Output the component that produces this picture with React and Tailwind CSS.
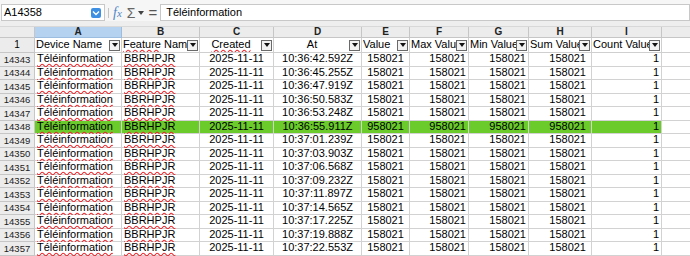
import React from "react";

const FONT = { fontFamily: '"Liberation Sans", Arial, sans-serif' };

const rows = [
  ["14343", "10:36:42.592Z", false],
  ["14344", "10:36:45.255Z", false],
  ["14345", "10:36:47.919Z", false],
  ["14346", "10:36:50.583Z", false],
  ["14347", "10:36:53.248Z", false],
  ["14348", "10:36:55.911Z", true],
  ["14349", "10:37:01.239Z", false],
  ["14350", "10:37:03.903Z", false],
  ["14351", "10:37:06.568Z", false],
  ["14352", "10:37:09.232Z", false],
  ["14353", "10:37:11.897Z", false],
  ["14354", "10:37:14.565Z", false],
  ["14355", "10:37:17.225Z", false],
  ["14356", "10:37:19.888Z", false],
  ["14357", "10:37:22.553Z", false],
];

const FilterBtn = () => (
  <span className="shrink-0 w-[11px] h-[11px] border border-[#6a6a6a] bg-[#f2f2f2] flex items-center justify-center mr-[1px]">
    <span className="w-0 h-0 border-l-[3px] border-r-[3px] border-t-[4px] border-l-transparent border-r-transparent border-t-[#111]" />
  </span>
);

const wavy = "underline decoration-wavy decoration-[#e8242a] underline-offset-[1px]";

function HeadCell({ w, children, center }) {
  return (
    <div className={`${w} h-full shrink-0 border-r border-b border-[#cfcfcf] flex items-center pl-[1px] overflow-hidden`}>
      <span className={`flex-1 min-w-0 overflow-hidden whitespace-nowrap pb-[2px] ${center ? "text-center" : "text-left"}`}>{children}</span>
      <FilterBtn />
    </div>
  );
}

export default function App() {
  const letters = [
    ["A", "w-[87px]"],
    ["B", "w-[78px]"],
    ["C", "w-[74px]"],
    ["D", "w-[88px]"],
    ["E", "w-[48px]"],
    ["F", "w-[59px]"],
    ["G", "w-[60px]"],
    ["H", "w-[63px]"],
    ["I", "w-[70px]"],
  ];
  return (
    <div className="w-[690px] h-[256px] overflow-hidden bg-[#f4f4f4] text-black" style={FONT}>
      {/* Formula bar */}
      <div className="h-[21px] flex items-end bg-[#f6f6f6]">
        <div className="ml-[1px] w-[104px] h-[17px] bg-white border border-[#c8c8c8] flex items-center pl-[2px] pr-[3px]">
          <span className="flex-1 text-[11px] leading-none">A14358</span>
          <span className="w-[10px] h-[10px] rounded-[2px] bg-[#3d8fe3] flex items-center justify-center">
            <svg width="8" height="6" viewBox="0 0 8 6"><path d="M1 1.5 L4 4.5 L7 1.5" stroke="white" strokeWidth="1.4" fill="none" /></svg>
          </span>
        </div>
        <div className="ml-[3px] mb-[3px] w-[1px] h-[10px] bg-[#c4c4c4]" />
        <div className="h-[17px] flex items-center">
          <span className="ml-[4px] text-[14px] leading-none italic text-[#4f86c6]" style={{ fontFamily: '"Liberation Serif", serif' }}>
            f<span className="text-[11px]">x</span>
          </span>
          <span className="ml-[5px] text-[14px] leading-none text-[#666]">Σ</span>
          <span className="ml-[3px] w-0 h-0 border-l-[3px] border-r-[3px] border-t-[4px] border-l-transparent border-r-transparent border-t-[#444]" />
          <span className="ml-[4px] text-[15px] leading-none text-[#555]">=</span>
        </div>
        <div className="ml-[3px] flex-1 h-[17px] bg-white border border-[#c8c8c8] flex items-center pl-[5px] text-[11px]">
          Téléinformation
        </div>
      </div>
      <div className="h-[6px] bg-[#eeeeee] border-b border-[#d8d8d8]" />

      {/* Column letters */}
      <div className="h-[11px] flex text-[10px] font-bold leading-none text-[#222]">
        <div className="w-[35px] shrink-0 bg-[#ececec] border-r border-b border-[#c6c6c6]" />
        {letters.map(([l, w], i) => (
          <div
            key={l}
            className={`${w} shrink-0 flex items-center justify-center border-r border-b ${i === 0 ? "bg-[#b5d3f1] border-[#9dbde0]" : "bg-[#ececec] border-[#c6c6c6]"}`}
          >
            {l}
          </div>
        ))}
        <div className="flex-1 bg-[#ececec] border-b border-[#c6c6c6]" />
      </div>

      {/* Header row 1 */}
      <div className="h-[15px] flex text-[11px] leading-none bg-white">
        <div className="w-[35px] shrink-0 bg-[#ececec] border-r border-b border-[#c6c6c6] flex items-center justify-center text-[10px]">1</div>
        <HeadCell w="w-[87px]">Device Name</HeadCell>
        <HeadCell w="w-[78px]"><span className={wavy}>Feature</span> Name</HeadCell>
        <HeadCell w="w-[74px]" center><span className={wavy}>Created</span></HeadCell>
        <HeadCell w="w-[88px]" center>At</HeadCell>
        <HeadCell w="w-[48px]">Value</HeadCell>
        <HeadCell w="w-[59px]">Max Value</HeadCell>
        <HeadCell w="w-[60px]">Min Value</HeadCell>
        <HeadCell w="w-[63px]">Sum Value</HeadCell>
        <HeadCell w="w-[70px]">Count Value</HeadCell>
        <div className="flex-1 border-b border-[#cfcfcf]" />
      </div>

      {/* Data rows */}
      {rows.map(([n, t, hl]) => {
        const v = hl ? "958021" : "158021";
        const bg = hl ? "bg-[#6acb2b]" : "bg-white";
        const cell = "h-full shrink-0 border-r border-b border-[#d2d2d2] flex items-center whitespace-nowrap pb-[1px]";
        return (
          <div key={n} className="h-[13.5px] flex text-[11px] leading-none">
            <div className="w-[35px] shrink-0 bg-[#ececec] border-r border-b border-[#c6c6c6] flex items-center justify-center text-[9.5px] text-[#222]">{n}</div>
            <div className={`w-[87px] ${cell} ${bg} pl-[2px]`}><span className={wavy}>Téléinformation</span></div>
            <div className={`w-[78px] ${cell} ${bg} pl-[2px]`}><span className={wavy}>BBRHPJR</span></div>
            <div className={`w-[74px] ${cell} ${bg} justify-center`}>2025-11-11</div>
            <div className={`w-[88px] ${cell} ${bg} justify-center`}>{t}</div>
            <div className={`w-[48px] ${cell} ${bg} justify-center`}>{v}</div>
            <div className={`w-[59px] ${cell} ${bg} justify-end pr-[2px]`}>{v}</div>
            <div className={`w-[60px] ${cell} ${bg} justify-end pr-[2px]`}>{v}</div>
            <div className={`w-[63px] ${cell} ${bg} justify-end pr-[5px]`}>{v}</div>
            <div className={`w-[70px] ${cell} ${bg} justify-end pr-[2px]`}>1</div>
            <div className="flex-1 h-full bg-white border-b border-[#d2d2d2]" />
          </div>
        );
      })}
    </div>
  );
}
